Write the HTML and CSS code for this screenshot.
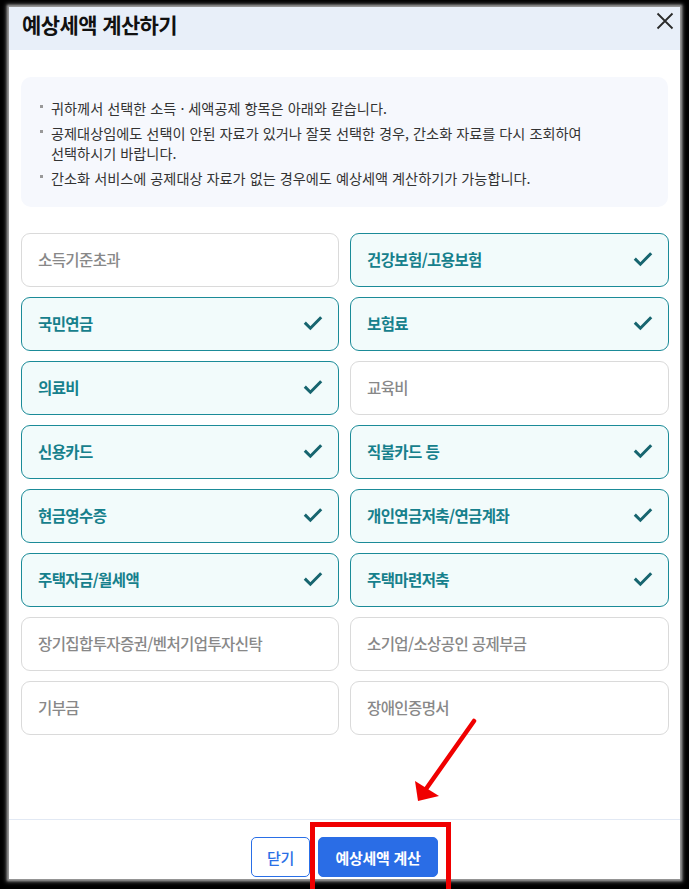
FILE: index.html
```html
<!DOCTYPE html>
<html lang="ko">
<head>
    <meta charset="UTF-8">
    <meta name="viewport" content="width=device-width, initial-scale=1.0">
    <title>예상세액 계산하기</title>
    <link rel="stylesheet" href="styles.css">
</head>
<body>
    <div class="modal">
        <!-- 헤더 -->
        <div class="modal-header">
            <h1 class="modal-title">예상세액 계산하기</h1>
            <button class="close-btn" type="button" aria-label="닫기">
                <svg width="18" height="18" viewBox="0 0 18 18">
                    <path d="M1.5 1.5 L16.5 16.5 M16.5 1.5 L1.5 16.5" stroke="#2b2b2b" stroke-width="1.8" fill="none"/>
                </svg>
            </button>
        </div>

        <div class="modal-body">
            <ul class="info-box">
                <li>귀하께서 선택한 소득 · 세액공제 항목은 아래와 같습니다.</li>
                <li>공제대상임에도 선택이 안된 자료가 있거나 잘못 선택한 경우, 간소화 자료를 다시 조회하여<br>선택하시기 바랍니다.</li>
                <li>간소화 서비스에 공제대상 자료가 없는 경우에도 예상세액 계산하기가 가능합니다.</li>
            </ul>

            <div class="card-grid">
                <div class="card">소득기준초과</div>
                <div class="card selected">건강보험/고용보험</div>
                <div class="card selected">국민연금</div>
                <div class="card selected">보험료</div>
                <div class="card selected">의료비</div>
                <div class="card">교육비</div>
                <div class="card selected">신용카드</div>
                <div class="card selected">직불카드 등</div>
                <div class="card selected">현금영수증</div>
                <div class="card selected">개인연금저축/연금계좌</div>
                <div class="card selected">주택자금/월세액</div>
                <div class="card selected">주택마련저축</div>
                <div class="card">장기집합투자증권/벤처기업투자신탁</div>
                <div class="card">소기업/소상공인 공제부금</div>
                <div class="card">기부금</div>
                <div class="card">장애인증명서</div>
            </div>
        </div>

        <div class="modal-footer">
            <button class="btn btn-outline" type="button">닫기</button>
            <button class="btn btn-primary" type="button">예상세액 계산</button>
        </div>
    </div>

    <!-- 강조 표시 -->
    <div class="highlight-box"></div>
    <svg class="arrow" width="689" height="889" viewBox="0 0 689 889">
        <line x1="474" y1="721" x2="426" y2="789" stroke="#f00000" stroke-width="4.5" stroke-linecap="round"/>
        <polygon points="418,801 415,781 439,796" fill="#f00000"/>
    </svg>

    <script>
        // 선택된 항목에 체크 아이콘 추가
        document.querySelectorAll('.card.selected').forEach(card => {
            card.insertAdjacentHTML('beforeend',
                '<svg class="check" width="20" height="16" viewBox="0 0 20 16">' +
                '<path d="M1.8 7.6 L7.4 13.2 L18.2 2.2" stroke="#17656f" stroke-width="3" fill="none"/></svg>');
        });
    </script>
</body>
</html>
```

FILE: styles.css
```css
* {
    margin: 0;
    padding: 0;
    box-sizing: border-box;
}

body {
    font-family: "Noto Sans CJK KR", "Noto Sans", sans-serif;
    background: #000;
    height: 889px;
    overflow: hidden;
    position: relative;
}

.modal {
    margin: 7px 0 0 9px;
    width: 671px;
    height: 872px;
    background: #fff;
    display: flex;
    flex-direction: column;
    box-shadow: 0 0 2px 2px #9a9a9a, 0 0 4px 3px #555;
}

.modal-header {
    height: 43px;
    background: #e8eff9;
    display: flex;
    align-items: center;
    justify-content: space-between;
    padding: 0 5px 0 13px;
}

.modal-title {
    font-size: 21px;
    font-weight: 700;
    color: #111;
    letter-spacing: -0.6px;
    line-height: 1;
    margin-top: -9px;
}

.close-btn {
    background: none;
    border: none;
    width: 20px;
    height: 20px;
    display: flex;
    align-items: center;
    justify-content: center;
    margin-top: -16px;
    cursor: pointer;
}

.modal-body {
    flex: 1;
    padding: 27px 12px 0;
}

.info-box {
    list-style: none;
    background: #f6f8fd;
    border-radius: 10px;
    padding: 21px 10px 19px 19px;
    font-size: 14.2px;
    color: #333;
    line-height: 20px;
}

.info-box li {
    position: relative;
    padding-left: 11px;
}

.info-box li + li {
    margin-top: 5px;
}

.info-box li::before {
    content: "";
    position: absolute;
    left: 0;
    top: 7px;
    width: 3px;
    height: 3px;
    background: #999;
}

.card-grid {
    margin-top: 26px;
    display: grid;
    grid-template-columns: 318px 319px;
    grid-auto-rows: 54px;
    gap: 10px 11px;
}

.card {
    border: 1px solid #dadada;
    border-radius: 9px;
    background: #fff;
    display: flex;
    align-items: center;
    justify-content: space-between;
    padding: 0 15px 2px 16px;
    font-size: 15.5px;
    font-weight: 500;
    color: #888;
    letter-spacing: -0.6px;
}

.card.selected {
    border-color: #1b8b98;
    background: #f2fbfb;
    color: #16808c;
    font-weight: 700;
}

.check {
    flex-shrink: 0;
}

.modal-footer {
    border-top: 1px solid #e2e9f4;
    height: 60px;
    padding-top: 17px;
    display: flex;
    justify-content: center;
    gap: 8px;
}

.btn {
    height: 40px;
    border-radius: 5px;
    font-family: inherit;
    font-size: 15px;
    letter-spacing: -0.3px;
    cursor: pointer;
}

.btn-outline {
    width: 59px;
    background: #fff;
    border: 1px solid #2a6fe6;
    color: #2a6fe6;
    font-weight: 500;
}

.btn-primary {
    width: 120px;
    background: #2a6de6;
    border: 1px solid #2a6de6;
    color: #fff;
    font-weight: 700;
}

.highlight-box {
    position: absolute;
    left: 310px;
    top: 822px;
    width: 141px;
    height: 80px;
    border: 5px solid #f00000;
}

.arrow {
    position: absolute;
    left: 0;
    top: 0;
    pointer-events: none;
}
```
